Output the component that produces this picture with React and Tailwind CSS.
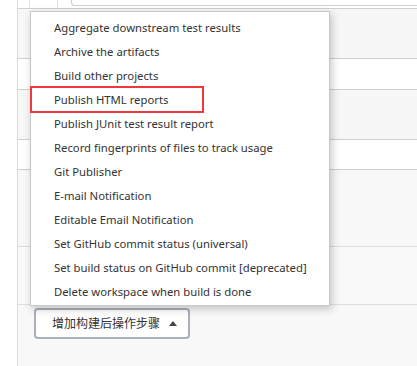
import React from "react";

const items = [
  "Aggregate downstream test results",
  "Archive the artifacts",
  "Build other projects",
  "Publish HTML reports",
  "Publish JUnit test result report",
  "Record fingerprints of files to track usage",
  "Git Publisher",
  "E-mail Notification",
  "Editable Email Notification",
  "Set GitHub commit status (universal)",
  "Set build status on GitHub commit [deprecated]",
  "Delete workspace when build is done",
];

export default function App() {
  return (
    <div
      className="relative w-[417px] h-[366px] overflow-hidden bg-white flex"
      style={{ fontFamily: '"Noto Sans", "Open Sans", "Noto Sans CJK SC", sans-serif' }}
    >
      <div className="w-[18px] shrink-0 bg-white border-r border-[#dcdcdc]" />
      <div className="flex-1 flex flex-col bg-[#f8f8f8]">
        <div className="h-[9px] bg-white border-b border-[#cfcfcf] flex">
          <div className="w-[12px] border-r border-[#e2e2e2]" />
          <div className="w-[28px] border-r border-[#e2e2e2]" />
          <div className="w-[13px]" />
          <div className="flex-1 h-[6px] border-l border-b border-[#cfcfcf] rounded-bl-[4px] bg-white" />
        </div>
        <div className="h-[50px] bg-[#f7f7f7] border-b border-[#cfcfcf]" />
        <div className="h-[31px] bg-white border-b border-[#cfcfcf]" />
        <div className="h-[50px] bg-[#f7f7f7] border-b border-[#cfcfcf]" />
        <div className="h-[30px] bg-white border-b border-[#cfcfcf]" />
        <div className="h-[77px] bg-[#f8f8f8] border-b border-[#dedede]" />
        <div className="h-[58px] bg-[#f9f9f9] border-b border-[#dedede]" />
        <div className="flex-1 bg-[#f8f8f8] pl-[16px] pt-[3px]">
          <button className="h-[31px] w-[156px] rounded-[4px] border-2 border-[#a9b0b8] bg-white flex items-center pl-[16px] gap-[9px] text-[12px] text-[#333]">
            <span>增加构建后操作步骤</span>
            <svg width="8" height="5" viewBox="0 0 8 5" className="mt-[-1px]">
              <path d="M0 5 L4 0 L8 5 Z" fill="#444" />
            </svg>
          </button>
        </div>
      </div>

      <div className="absolute left-[30px] top-[11px] w-[300px] bg-white border border-[#c8c8c8] shadow-[2px_3px_8px_rgba(0,0,0,0.22)] pt-[4px] pb-[1px]">
        {items.map((t, i) => (
          <div
            key={t}
            className={
              "h-[24px] flex items-center pl-[23px] text-[11.3px] text-[#333] whitespace-nowrap " +
              (i === 3 ? "relative" : "")
            }
          >
            {t}
            {i === 3 && (
              <div className="absolute left-[-1px] top-[-2px] w-[174px] h-[27px] border-2 border-[#f0383a]" />
            )}
          </div>
        ))}
      </div>
    </div>
  );
}
